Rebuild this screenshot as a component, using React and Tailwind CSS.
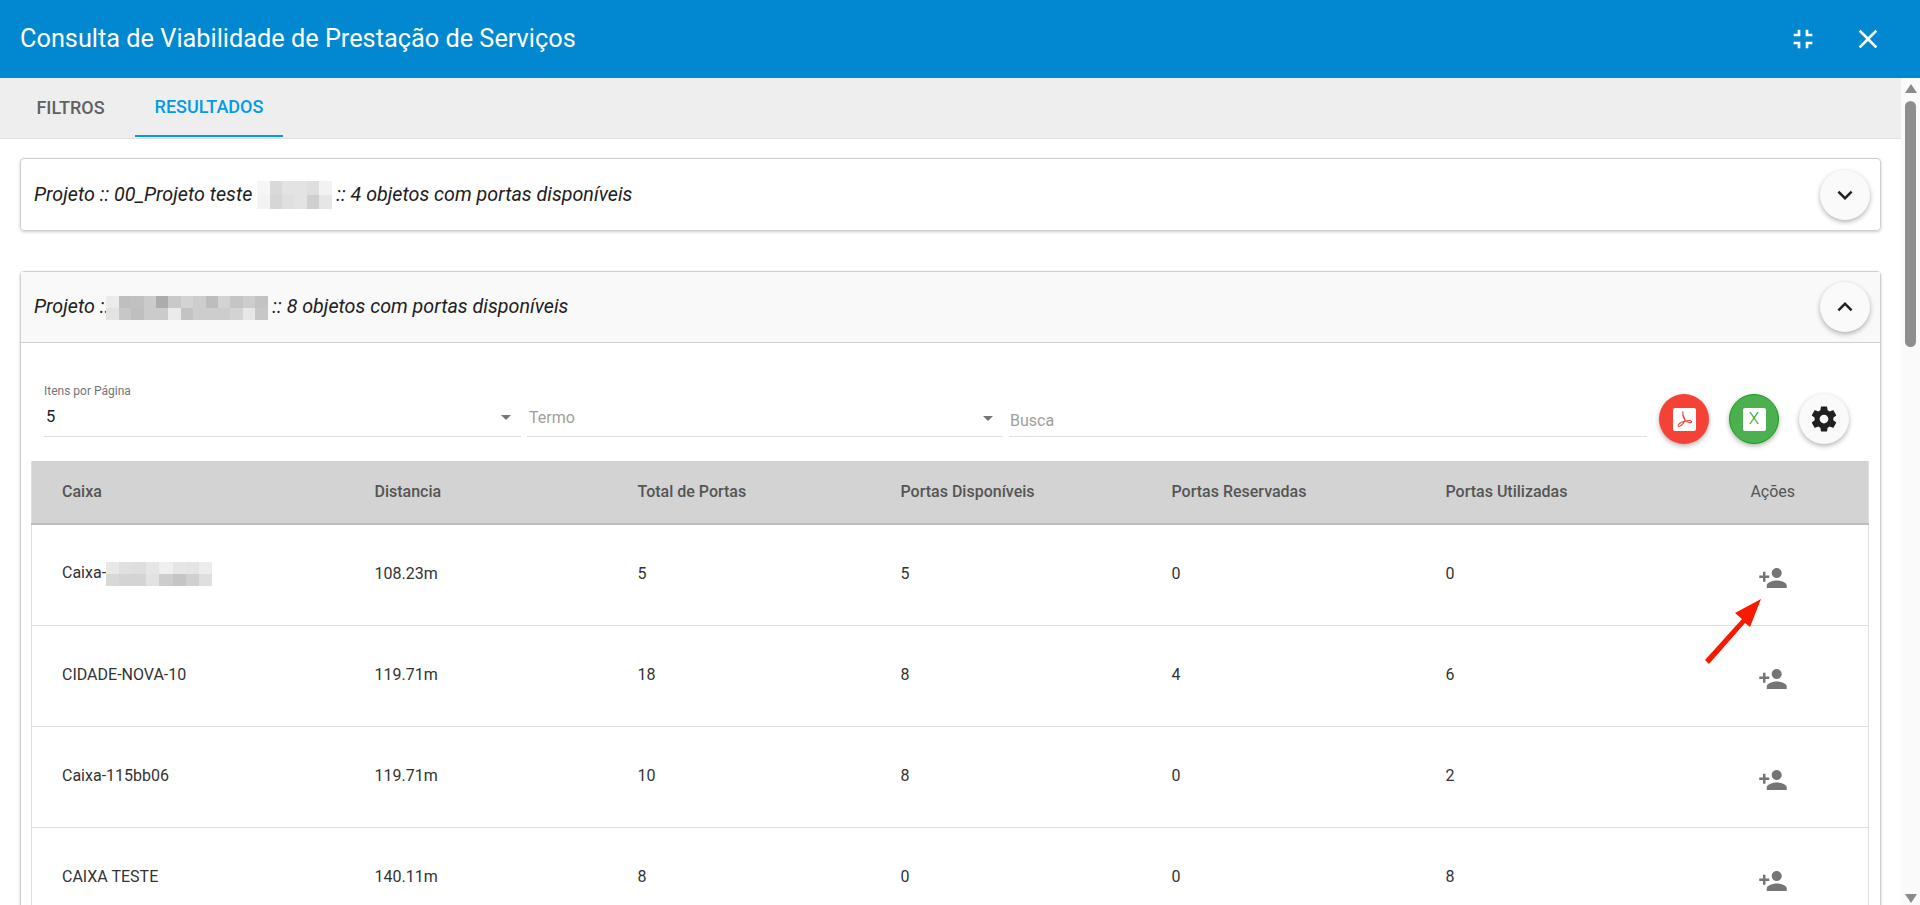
const ADD = "M15 12c2.21 0 4-1.79 4-4s-1.79-4-4-4-4 1.79-4 4 1.79 4 4 4zm-9-2V7H4v3H1v2h3v3h2v-3h3v-2H6zm9 4c-2.67 0-8 1.34-8 4v2h16v-2c0-2.66-5.33-4-8-4z";
const GEAR = "M19.43 12.98c.04-.32.07-.64.07-.98s-.03-.66-.07-.98l2.11-1.65c.19-.15.24-.42.12-.64l-2-3.46c-.12-.22-.39-.3-.61-.22l-2.49 1c-.52-.4-1.08-.73-1.69-.98l-.38-2.65C14.46 2.18 14.25 2 14 2h-4c-.25 0-.46.18-.49.42l-.38 2.65c-.61.25-1.17.59-1.69.98l-2.49-1c-.23-.09-.49 0-.61.22l-2 3.46c-.13.22-.07.49.12.64l2.11 1.65c-.04.32-.07.65-.07.98s.03.66.07.98l-2.11 1.65c-.19.15-.24.42-.12.64l2 3.46c.12.22.39.3.61.22l2.49-1c.52.4 1.08.73 1.69.98l.38 2.65c.03.24.24.42.49.42h4c.25 0 .46-.18.49-.42l.38-2.65c.61-.25 1.17-.59 1.69-.98l2.49 1c.23.09.49 0 .61-.22l2-3.46c.12-.22.07-.49-.12-.64l-2.11-1.65zM12 15.5c-1.93 0-3.5-1.57-3.5-3.5s1.57-3.5 3.5-3.5 3.5 1.57 3.5 3.5-1.57 3.5-3.5 3.5z";

function Icon({ d, size, className }) {
  return (
    <svg viewBox="0 0 24 24" width={size} height={size} fill="currentColor" className={className}>
      <path d={d} />
    </svg>
  );
}

function Blur({ rows, cell, h, className = "" }) {
  return (
    <span className={"inline-flex flex-col align-middle " + className}>
      {rows.map((r, i) => (
        <span key={i} className="flex">
          {r.map((c, j) => (
            <span key={j} style={{ width: cell, height: h, background: c }} />
          ))}
        </span>
      ))}
    </span>
  );
}

const blur1 = [
  ["#f6f6f6", "#d9d9d9", "#e3e3e3", "#e3e3e3", "#dedede", "#f2f2f2"],
  ["#f3f3f3", "#d6d6d6", "#dfdfdf", "#e3e3e3", "#cfcfcf", "#e6e6e6"],
];
const blur2 = [
  ["#ebebeb", "#bfbfbf", "#c1c1c1", "#cbcbcb", "#acacac", "#c9c9c9", "#d3d3d3", "#cdcdcd", "#bdbdbd", "#d3d3d3", "#c5c5c5", "#cdcdcd", "#c3c3c3"],
  ["#e3e3e3", "#c7c7c7", "#bfbfbf", "#cbcbcb", "#cbcbcb", "#ebebeb", "#c3c3c3", "#cdcdcd", "#cdcdcd", "#cdcdcd", "#d3d3d3", "#e7e7e7", "#c7c7c7"],
];
const blur3 = [
  ["#e8e8e8", "#e0e0e0", "#dedede", "#e6e6e6", "#efefef", "#e6e6e6", "#e4e4e4", "#ececec"],
  ["#d8d8d8", "#d4d4d4", "#d4d4d4", "#e2e2e2", "#cdcdcd", "#c5c5c5", "#d0d0d0", "#dfdfdf"],
];

const rows = [
  [<>Caixa-<Blur rows={blur3} cell={13.3} h={12} /></>, "108.23m", "5", "5", "0", "0"],
  ["CIDADE-NOVA-10", "119.71m", "18", "8", "4", "6"],
  ["Caixa-115bb06", "119.71m", "10", "8", "0", "2"],
  ["CAIXA TESTE", "140.11m", "8", "0", "0", "8"],
];

const heads = ["Caixa", "Distancia", "Total de Portas", "Portas Disponíveis", "Portas Reservadas", "Portas Utilizadas"];

function RoundButton({ className, children }) {
  return (
    <button className={"flex h-[50px] w-[50px] items-center justify-center rounded-full shadow-[0_2px_5px_rgba(0,0,0,0.3)] " + className}>
      {children}
    </button>
  );
}

function Caret() {
  return <span className="h-0 w-0 border-x-[5px] border-t-[5px] border-x-transparent border-t-[#757575]" />;
}

export default function App() {
  return (
    <div className="relative flex h-[905px] w-full flex-col overflow-hidden bg-white font-['Roboto',sans-serif] text-[#212121]">
      <header className="flex h-[78px] shrink-0 items-center bg-[#0288d1] pl-[20px] pr-[36px] text-white">
        <h1 className="flex-1 text-[25.3px] font-normal">Consulta de Viabilidade de Prestação de Serviços</h1>
        <Icon d="M5 16h3v3h2v-5H5v2zm3-8H5v2h5V5H8v3zm6 11h2v-3h3v-2h-5v5zm2-11V5h-2v5h5V8h-3z" size={32} className="mr-[33px]" />
        <Icon d="M19 6.41L17.59 5 12 10.59 6.41 5 5 6.41 10.59 12 5 17.59 6.41 19 12 13.41 17.59 19 19 17.59 13.41 12z" size={32} />
      </header>

      <div className="flex min-h-0 flex-1">
        <main className="min-w-0 flex-1 overflow-hidden">
          <nav className="flex h-[61px] border-b border-[#e0e0e0] bg-[#eeeeee] pl-[16px] text-[18px] font-medium">
            <div className="mr-[10px] flex h-[59px] w-[109px] items-center justify-center text-[#616161]">FILTROS</div>
            <div className="flex h-[59px] w-[148px] items-center justify-center border-b-2 border-[#039be5] text-[#039be5]">RESULTADOS</div>
          </nav>

          <section className="px-[20px] pt-[19px]">
            <div className="flex h-[73px] items-center justify-between rounded-[4px] border border-[#cfcfcf] pl-[13px] pr-[10px] shadow-[0_1px_3px_rgba(0,0,0,0.2)]">
              <p className="text-[19.7px] italic">
                Projeto :: 00_Projeto teste <Blur rows={blur1} cell={12.4} h={14} /> :: 4 objetos com portas disponíveis
              </p>
              <RoundButton className="bg-[#fafafa]">
                <Icon d="M16.59 8.59L12 13.17 7.41 8.59 6 10l6 6 6-6z" size={30} />
              </RoundButton>
            </div>

            <div className="mt-[40px] rounded-[4px] border border-[#cfcfcf] shadow-[0_1px_3px_rgba(0,0,0,0.2)]">
              <div className="flex h-[71px] items-center justify-between border-b border-[#cfcfcf] bg-[#f9f9f9] pl-[13px] pr-[10px]">
                <p className="text-[19.7px] italic">
                  Projeto :.<Blur rows={blur2} cell={12.4} h={12} className="-ml-[3px]" /> :: 8 objetos com portas disponíveis
                </p>
                <RoundButton className="bg-[#fafafa]">
                  <Icon d="M7.41 15.41L12 10.83l4.59 4.58L18 14l-6-6-6 6z" size={30} />
                </RoundButton>
              </div>

              <div className="pl-[10px] pr-[11px] pt-[41px]">
                <div className="flex h-[53px] items-end">
                  <div className="ml-[13px] w-[477px] border-b border-[#e0e0e0]">
                    <div className="text-[12px] leading-[14px] text-[#757575]">Itens por Página</div>
                    <div className="flex h-[38px] items-center justify-between pl-[2px] pr-[10px] pt-[1px] text-[16.5px]">
                      5
                      <Caret />
                    </div>
                  </div>
                  <div className="ml-[6px] flex h-[39px] w-[476px] items-center justify-between border-b border-[#e0e0e0] pl-[2px] pr-[10px] pt-[2px] text-[16px] text-[#9e9e9e]">
                    Termo
                    <Caret />
                  </div>
                  <div className="ml-[6px] flex h-[33px] w-[638px] items-center border-b border-[#e0e0e0] pl-px pt-[2px] text-[16px] text-[#9e9e9e]">
                    Busca
                  </div>
                  <div className="mb-[-7px] ml-[12px] flex gap-[20px]">
                    <RoundButton className="bg-[#f44336]">
                      <span className="flex h-[23px] w-[23px] items-center justify-center rounded-[2px] bg-white">
                        <svg viewBox="0 0 24 24" width="20" height="20" fill="none" stroke="#f44336" strokeWidth="1.3">
                          <path d="M11 3c-1 2 1 7 2 9 1 2-4 9-7 9-2 0-1-3 3-5 4-2 11-3 12-1 1 2-5 2-8-2-2-3-3-7-2-10z" />
                        </svg>
                      </span>
                    </RoundButton>
                    <RoundButton className="border border-[#16a116] bg-[#4caf50]">
                      <span className="flex h-[23px] w-[23px] items-center justify-center rounded-[2px] bg-white text-[17px] font-light text-[#22a522]">X</span>
                    </RoundButton>
                    <RoundButton className="mr-[19px] bg-[#fafafa]">
                      <Icon d={GEAR} size={30} className="text-[#212121]" />
                    </RoundButton>
                  </div>
                </div>

                <table className="mt-[24px] w-full table-fixed border-x border-[#e0e0e0] text-left text-[16px]">
                  <colgroup>
                    <col className="w-[343px]" />
                    <col className="w-[263px]" />
                    <col className="w-[263px]" />
                    <col className="w-[271px]" />
                    <col className="w-[274px]" />
                    <col className="w-[234px]" />
                    <col />
                  </colgroup>
                  <thead>
                    <tr className="h-[63px] border-b-2 border-[#bdbdbd] bg-[#d3d3d3] text-[#555555]">
                      {heads.map((h, i) => (
                        <th key={h} className={"font-medium " + (i === 0 ? "pl-[30px]" : "")}>{h}</th>
                      ))}
                      <th className="pr-[2px] text-center font-normal">Ações</th>
                    </tr>
                  </thead>
                  <tbody>
                    {rows.map((row, r) => (
                      <tr key={r} className="h-[101px] border-b border-[#e0e0e0] text-[#333333]">
                        {row.map((c, i) => (
                          <td key={i} className={i === 0 ? "pb-[2px] pl-[30px]" : "pb-[2px]"}>{c}</td>
                        ))}
                        <td className="pr-[2px] pt-[6px] text-center">
                          <Icon d={ADD} size={30} className="mx-auto text-[#757575]" />
                        </td>
                      </tr>
                    ))}
                  </tbody>
                </table>
              </div>
            </div>
          </section>
        </main>

        <aside className="flex w-[19px] shrink-0 flex-col items-center bg-[#fafafa] px-[4px] pt-[6px]">
          <span className="h-0 w-0 shrink-0 border-x-[6px] border-b-[9px] border-x-transparent border-b-[#8a8a8a]" />
          <span className="mt-[8px] h-[246px] w-[11px] shrink-0 rounded-full bg-[#8e8e8e]" />
          <span className="mt-auto mb-[2px] h-0 w-0 shrink-0 border-x-[6px] border-t-[9px] border-x-transparent border-t-[#8a8a8a]" />
        </aside>
      </div>

      <svg className="pointer-events-none absolute left-[1700px] top-[595px]" width="66" height="72" viewBox="1700 595 66 72" fill="#f81a00">
        <path d="M1761 599 L1735 613 L1742 619 L1705 660 L1709 664 L1745 623 L1750 627 Z" />
      </svg>
    </div>
  );
}
